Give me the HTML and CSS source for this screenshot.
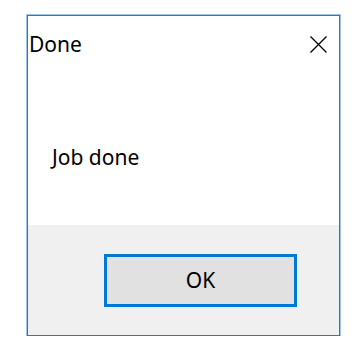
FILE: index.html
```html
<!DOCTYPE html>
<html>
<head>
<meta charset="utf-8">
<link rel="stylesheet" href="styles.css">
</head>
<body>
<div class="dialog">
  <div class="titlebar">
    <span class="title">Done</span>
    <svg class="close" width="17" height="17" viewBox="0 0 17 17"><path d="M0.5 0.5 L16.5 16.5 M16.5 0.5 L0.5 16.5" stroke="#000" stroke-width="1.3" fill="none"/></svg>
  </div>
  <div class="content">
    <p class="message">Job done</p>
  </div>
  <div class="footer">
    <button class="btn">OK</button>
  </div>
</div>
</body>
</html>
```

FILE: styles.css
```css
html, body {
  margin: 0;
  padding: 0;
  background: #ffffff;
}
body {
  padding: 15px 0 0 27px;
  font-family: "Noto Sans", "Open Sans", sans-serif;
  color: #000;
}
.dialog {
  width: 313px;
  height: 321px;
  box-sizing: border-box;
  border: 1px solid #1f7ad3;
  box-shadow: 0 0 0 1px #9cc5ee;
  display: flex;
  flex-direction: column;
  background: #fff;
}
.titlebar {
  display: flex;
  align-items: center;
  justify-content: space-between;
  height: 56px;
  padding: 0 12px 0 1px;
  flex: none;
}
.title {
  font-size: 21px;
  line-height: 28px;
}
.close {
  display: block;
}
.content {
  flex: 1;
  padding: 0 0 0 24px;
}
.message {
  margin: 0;
  margin-top: 71px;
  font-size: 21px;
  line-height: 28px;
}
.footer {
  flex: none;
  height: 110px;
  background: #f0f0f0;
  display: flex;
  align-items: center;
  justify-content: flex-end;
  padding-right: 42px;
}
.btn {
  width: 193px;
  height: 53px;
  box-sizing: border-box;
  border: 3px solid #0078d7;
  background: #e1e1e1;
  font-family: "Noto Sans", "Open Sans", sans-serif;
  font-size: 21px;
  color: #000;
  padding: 0;
  margin: 0;
}
```
